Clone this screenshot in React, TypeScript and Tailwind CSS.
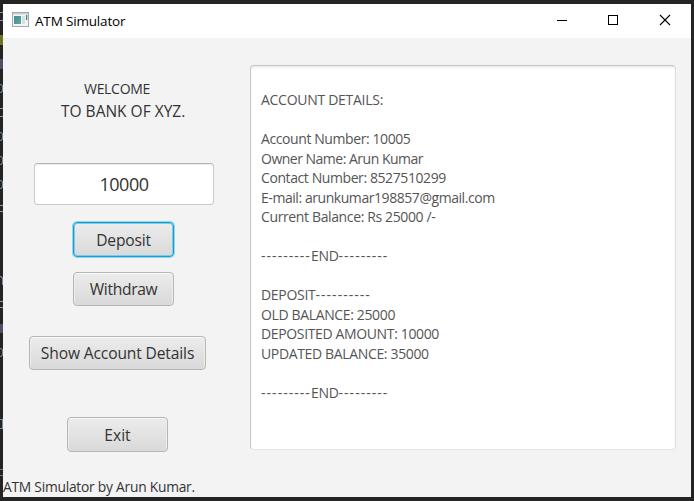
import type { ReactNode } from "react";

const bowl = "h-[9px] w-[3px] rounded-r-[3px] border border-l-0 border-[#76869c]";
const arc = "h-[9px] w-[3px] border-y border-[#8494a8]";
const bars = "h-[7px] w-[3px] border-y border-[#999]";
const stem = "h-[9px] w-[3px] rounded-tr-[3px] border-t border-r border-[#7f90a5]";

const gutter = [
  arc,
  "h-[10px] w-[3px] bg-[#6f7420]",
  "h-[10px] w-[3px] bg-[#475364]",
  bowl,
  arc,
  bowl,
  bowl,
  bowl,
  bars,
  "",
  "",
  stem,
  bars,
  "h-[9px] w-[3px] bg-[#4e5068]",
  bowl,
  "",
  "",
  "h-[10px] w-[3px] border border-l-0 border-[#7f90a5]",
  "",
  "h-[7px] w-[3px] border-y border-[#777]",
];

const log = [
  { text: "", fit: "" },
  { text: "ACCOUNT DETAILS:", fit: "tracking-[-0.28px]" },
  { text: "", fit: "" },
  { text: "Account Number: 10005", fit: "tracking-[-0.41px]" },
  { text: "Owner Name: Arun Kumar", fit: "tracking-[-0.5px]" },
  { text: "Contact Number: 8527510299", fit: "tracking-[-0.41px]" },
  { text: "E-mail: arunkumar198857@gmail.com", fit: "tracking-[-0.44px]" },
  { text: "Current Balance: Rs 25000 /-", fit: "tracking-[-0.37px]" },
  { text: "", fit: "" },
  { text: "---------END---------", fit: "tracking-[-0.3px]" },
  { text: "", fit: "" },
  { text: "DEPOSIT----------", fit: "tracking-[-0.3px]" },
  { text: "OLD BALANCE: 25000", fit: "tracking-[-0.36px]" },
  { text: "DEPOSITED AMOUNT: 10000", fit: "tracking-[-0.36px]" },
  { text: "UPDATED BALANCE: 35000", fit: "tracking-[-0.35px]" },
  { text: "", fit: "" },
  { text: "---------END---------", fit: "tracking-[-0.3px]" },
];

function LogText({ text }: { text: string }) {
  return (
    <>
      {text.split(/(-{3,})/).map((part, i) =>
        part.startsWith("---") ? (
          <span key={i} className="tracking-[1.04px]">
            {part}
          </span>
        ) : (
          part
        ),
      )}
    </>
  );
}

function Button({ className, focused, children }: { className: string; focused?: boolean; children: ReactNode }) {
  return (
    <button
      className={`flex items-center justify-center rounded-[4px] border bg-linear-to-b from-[#ececec] to-[#d9d9d9] pt-[2px] text-[15.6px] whitespace-nowrap text-[#333] ${
        focused
          ? "border-[#159fd0] shadow-[0_0_0_1px_#8fd6ee,inset_0_0_0_1px_#7fcbe6]"
          : "border-[#b5b5b5] shadow-[inset_0_1px_0_#f8f8f8,inset_1px_0_0_#ededed,inset_-1px_0_0_#ededed]"
      } ${className}`}
    >
      {children}
    </button>
  );
}

function TitleBar() {
  return (
    <header className="flex h-[34px] shrink-0 items-center bg-white pl-[9px] text-black">
      <svg width="17" height="15" viewBox="0 0 17 15" className="-mt-[3px]">
        <defs>
          <linearGradient id="pane" x1="0" y1="0" x2="1" y2="1">
            <stop offset="0" stopColor="#4a86a8" />
            <stop offset="1" stopColor="#5cae86" />
          </linearGradient>
        </defs>
        <rect x="0.5" y="0.5" width="16" height="14" fill="#f2f4f5" stroke="#a3a8ad" />
        <rect x="1" y="1" width="15" height="1.5" fill="#c9d0d6" />
        <rect x="2" y="4" width="7" height="8" fill="url(#pane)" />
        <rect x="10" y="4" width="3" height="8" fill="#d9dfe0" />
        <rect x="14" y="3" width="1.3" height="5" fill="#3d8583" />
      </svg>
      <h1 className="ml-[6px] text-[13.5px] leading-[18px] whitespace-nowrap tracking-[-0.17px]">ATM Simulator</h1>
      <div className="ml-auto flex">
        <svg width="52" height="34" viewBox="0 0 52 34" shapeRendering="crispEdges">
          <path d="M22 16.5h10" stroke="#000" />
        </svg>
        <svg width="52" height="34" viewBox="0 0 52 34" shapeRendering="crispEdges">
          <rect x="21.5" y="11.5" width="9" height="9" fill="none" stroke="#000" />
        </svg>
        <svg width="52" height="34" viewBox="0 0 52 34">
          <path d="M21 11l10 10M31 11L21 21" stroke="#000" strokeWidth="1.1" />
        </svg>
      </div>
    </header>
  );
}

export default function App() {
  return (
    <div className="flex h-[501px] w-[694px] overflow-hidden bg-[#242424] pt-1 pr-[3px] pb-1 font-['Open_Sans','Noto_Sans',sans-serif]">
      <div className="w-[3px] shrink-0">
        {gutter.map((mark, i) => (
          <div key={i} className="flex h-6 items-center">
            <i className={mark} />
          </div>
        ))}
      </div>
      <main className="flex min-w-0 flex-1 flex-col bg-[#f3f3f3]">
        <TitleBar />
        <div className="flex flex-1 text-[#333]">
          <div className="flex w-[247px] flex-col items-start">
            <p className="mt-[41px] ml-[81px] text-[14px] leading-5 tracking-[-0.3px] whitespace-nowrap">WELCOME</p>
            <p className="mt-[2px] ml-[58px] text-[15.5px] leading-5 whitespace-nowrap">TO BANK OF XYZ.</p>
            <div className="mt-[42px] ml-[31px] flex h-[42px] w-[180px] items-center justify-center rounded-[4px] border border-[#cacaca] border-t-[#b5b5b5] bg-white pt-px text-[18px] shadow-[inset_0_1px_1px_#eee]">
              <span className="tracking-[-0.5px]">10000</span>
            </div>
            <Button focused className="mt-[17px] ml-[70px] h-[35px] w-[101px]">
              <span className="tracking-[-0.2px]">Deposit</span>
            </Button>
            <Button className="mt-[15px] ml-[70px] h-[34px] w-[101px]">
              <span className="tracking-[-0.3px]">Withdraw</span>
            </Button>
            <Button className="mt-[30px] ml-[26px] h-[34px] w-[177px]">
              <span className="tracking-[-0.14px]">Show Account Details</span>
            </Button>
            <Button className="mt-[47px] ml-[64px] h-[35px] w-[101px]">
              <span>Exit</span>
            </Button>
            <p className="mt-[25px] text-[13.8px] leading-5 tracking-[-0.24px] whitespace-nowrap">ATM Simulator by Arun Kumar.</p>
          </div>
          <div className="mt-[27px] h-[385px] w-[426px] rounded-[4px] border border-t-[#c4c4c4] border-r-[#dedede] border-b-[#e4e4e4] border-l-[#c8c8c8] bg-white pt-[5px] pl-[10px] text-[14px] leading-[19.47px] text-[#555] shadow-[inset_0_2px_2px_#efefef]">
            {log.map((line, i) => (
              <div key={i} className="h-[19.47px] whitespace-nowrap">
                <span className={line.fit}>
                  <LogText text={line.text} />
                </span>
              </div>
            ))}
          </div>
        </div>
      </main>
    </div>
  );
}
